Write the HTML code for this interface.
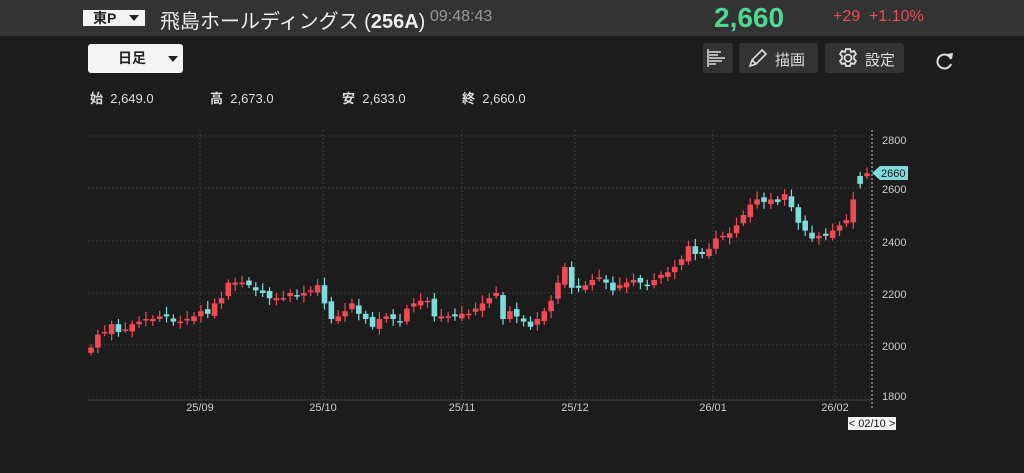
<!DOCTYPE html><html><head><meta charset="utf-8"><style>
body{margin:0;width:1024px;height:473px;background:#1c1c1c;overflow:hidden;font-family:"Liberation Sans","Noto Sans CJK JP",sans-serif;position:relative;color:#ddd}
.top{position:absolute;left:0;top:0;width:1024px;height:36px;background:#333}
.a{position:absolute;white-space:nowrap}
.btn{position:absolute;background:#333;border-radius:3px}
</style></head><body>
<div class="top"></div>
<div class="a" style="left:83px;top:10px;width:62px;height:16px;background:#f4f4f4;color:#222;font-size:14px;line-height:16px;font-weight:bold"><span style="margin-left:10px">東P</span><span style="position:absolute;left:46px;top:5px;border:5px solid transparent;border-top:6px solid #222;border-bottom:0"></span></div>
<div class="a" style="left:160px;top:5px;font-size:20px;color:#eee">飛島ホールディングス (<b>256A</b>)</div>
<div class="a" style="left:430px;top:8px;font-size:16px;color:#999">09:48:43</div>
<div class="a" style="left:714px;top:2px;font-size:28px;color:#4fd890;font-weight:bold">2,660</div>
<div class="a" style="left:833px;top:8px;font-size:16px;color:#f04a55">+29&nbsp;&nbsp;+1.10%</div>
<div class="a" style="left:88px;top:44px;width:95px;height:29px;background:#f4f4f4;border-radius:3px;color:#222;font-size:14px;line-height:29px;font-weight:bold"><span style="margin-left:30px">日足</span><span style="position:absolute;left:80px;top:12px;border:5px solid transparent;border-top:6px solid #222;border-bottom:0"></span></div>
<div class="btn" style="left:703px;top:43px;width:30px;height:30px"><svg width="30" height="30"><g stroke="#ddd" stroke-width="1.5"><line x1="5" y1="6" x2="5" y2="24"/><line x1="6" y1="9" x2="18" y2="9"/><line x1="6" y1="12" x2="15" y2="12"/><line x1="6" y1="15" x2="22" y2="15"/><line x1="6" y1="18" x2="19" y2="18"/><line x1="6" y1="21" x2="13" y2="21"/></g></svg></div>
<div class="btn" style="left:739px;top:43px;width:79px;height:30px"><svg class="a" style="left:8px;top:4px" width="22" height="22"><path d="M3 19 L5 13 L15 3 L19 7 L9 17 Z M5 13 L9 17" fill="none" stroke="#ddd" stroke-width="1.6"/></svg><span class="a" style="left:36px;top:6px;font-size:15px;color:#ddd">描画</span></div>
<div class="btn" style="left:825px;top:43px;width:79px;height:30px"><svg class="a" style="left:12px;top:4px" width="22" height="22"><circle cx="11" cy="11" r="3.5" fill="none" stroke="#ddd" stroke-width="1.8"/><path d="M9 2h4l1 3 3-1 2 3-2 2 0 3 2 2-2 3-3-1-1 3h-4l-1-3-3 1-2-3 2-2 0-3-2-2 2-3 3 1z" fill="none" stroke="#ddd" stroke-width="1.8"/></svg><span class="a" style="left:40px;top:6px;font-size:15px;color:#ddd">設定</span></div>
<svg class="a" style="left:934px;top:50px" width="22" height="22"><path d="M17 9 A7 7 0 1 0 17 14" fill="none" stroke="#ddd" stroke-width="2"/><path d="M13 4 L18 9 L19 3 Z" fill="#ddd"/></svg>
<div class="a" style="left:90px;top:88px;font-size:13px;color:#ddd"><b>始</b>&nbsp; 2,649.0</div>
<div class="a" style="left:210px;top:88px;font-size:13px;color:#ddd"><b>高</b>&nbsp; 2,673.0</div>
<div class="a" style="left:342px;top:88px;font-size:13px;color:#ddd"><b>安</b>&nbsp; 2,633.0</div>
<div class="a" style="left:462px;top:88px;font-size:13px;color:#ddd"><b>終</b>&nbsp; 2,660.0</div>
<svg id="c" class="a" style="left:0;top:0" width="1024" height="473"></svg>
<script>
var s='';
var ys=[136,188,241,293,345,397];
ys.forEach(function(y){s+='<line x1="88" y1="'+y+'" x2="872" y2="'+y+'" stroke="#3a3a3a" stroke-dasharray="2,2"/>';});
[200,323,462,575,713,835].forEach(function(x){s+='<line x1="'+x+'" y1="130" x2="'+x+'" y2="400" stroke="#3a3a3a" stroke-dasharray="2,2"/>';});
s+='<line x1="88" y1="400" x2="872" y2="400" stroke="#444"/>';
s+='<line x1="872" y1="130" x2="872" y2="410" stroke="#ccc" stroke-dasharray="2,2"/>';
[["2800",144],["2600",193],["2400",246],["2200",298],["2000",350],["1800",400]].forEach(function(a){s+='<text x="882" y="'+a[1]+'" fill="#ccc" font-size="11" font-family="Liberation Sans">'+a[0]+'</text>';});
[["25/09",200],["25/10",323],["25/11",462],["25/12",575],["26/01",713],["26/02",835]].forEach(function(a){s+='<text x="'+a[1]+'" y="411" fill="#ccc" font-size="11" text-anchor="middle" font-family="Liberation Sans">'+a[0]+'</text>';});
var c=[1990,2040,2050,2080,2050,2060,2080,2090,2100,2100,2110,2110,2090,2090,2100,2110,2130,2120,2160,2180,2240,2240,2240,2230,2210,2200,2180,2180,2180,2200,2190,2200,2210,2230,2160,2100,2110,2130,2160,2120,2100,2070,2100,2110,2100,2090,2140,2160,2170,2170,2110,2110,2110,2110,2120,2120,2140,2160,2180,2200,2100,2130,2110,2090,2070,2100,2130,2170,2240,2300,2220,2220,2230,2250,2260,2240,2210,2230,2240,2250,2240,2230,2250,2270,2280,2300,2330,2380,2350,2350,2370,2410,2420,2430,2460,2500,2540,2560,2550,2560,2550,2580,2530,2470,2440,2410,2420,2420,2440,2460,2480,2560,2630,2660];
var n=c.length;function Y(p){return 345-(p-2000)*0.26;}
for(var i=0;i<n;i++){var x=91+i*(776/(n-1));var o=i?c[i-1]+((i%3)-1)*8:1970;var cl=c[i];
if(i==n-2){o=2650;cl=2620;}if(i==n-1){o=2649;cl=2660;}
var up=cl>=o;var col=up?'#f04a55':'#7fdcdc';
var hi=Math.max(o,cl)+12+(i*7%20),lo=Math.min(o,cl)-10-(i*11%18);
var t=Y(Math.max(o,cl)),b=Y(Math.min(o,cl));if(b-t<1.5)b=t+1.5;
s+='<line x1="'+x+'" y1="'+Y(hi)+'" x2="'+x+'" y2="'+Y(lo)+'" stroke="'+col+'" stroke-width="1.2"/>';
s+='<rect x="'+(x-2.8)+'" y="'+t+'" width="5.6" height="'+(b-t)+'" fill="'+col+'"/>';}
s+='<path d="M872 173 L880 166 L908 166 L908 180 L880 180 Z" fill="#7fdcdc"/><text x="881" y="177" fill="#111" font-size="11" font-family="Liberation Sans">2660</text>';
s+='<rect x="848" y="417" width="48" height="13" fill="#f4f4f4"/><text x="872" y="427" fill="#111" font-size="11" text-anchor="middle" font-family="Liberation Sans">&lt; 02/10 &gt;</text>';
document.getElementById('c').innerHTML=s;
</script>
</body></html>
